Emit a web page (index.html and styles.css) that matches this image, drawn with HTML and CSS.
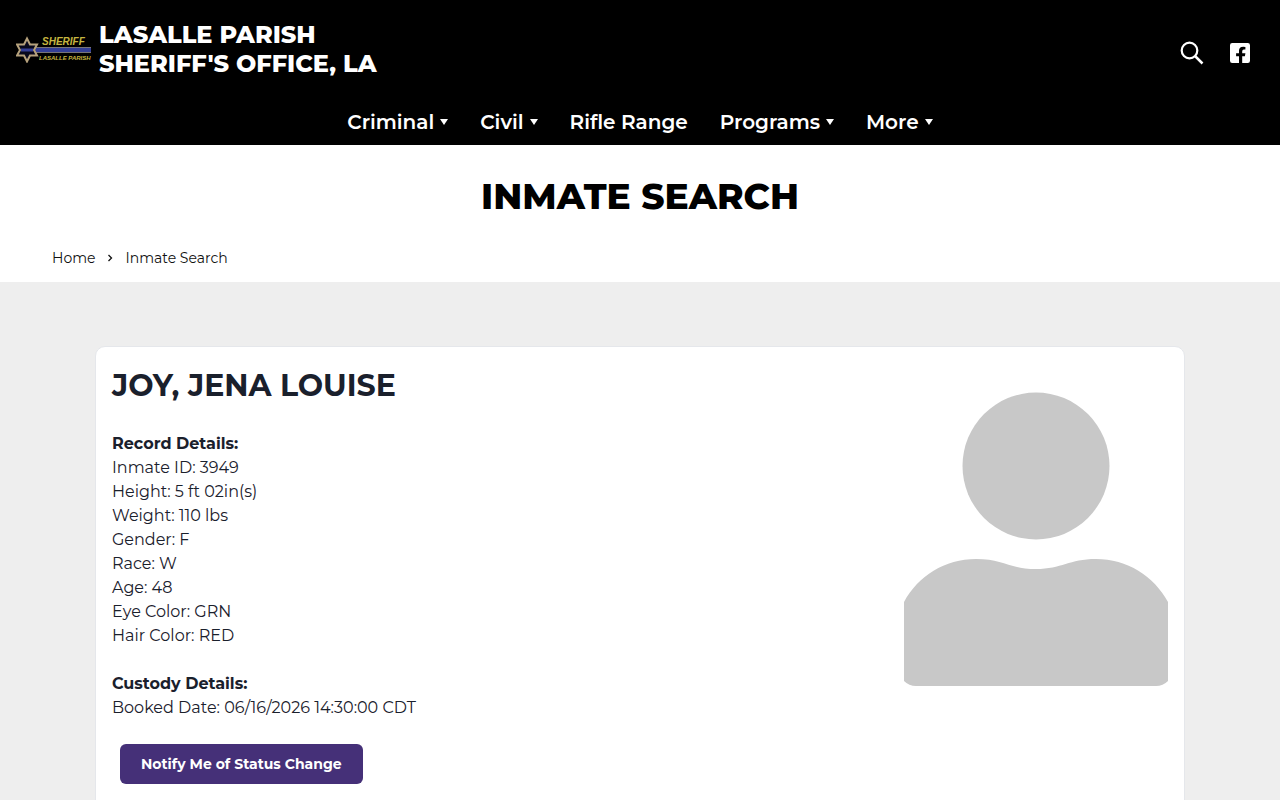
FILE: index.html
```html
<!DOCTYPE html>
<html lang="en">
<head>
<meta charset="utf-8">
<title>Inmate Search</title>
<link rel="stylesheet" href="styles.css">
</head>
<body>
<header class="header">
  <div class="topbar">
    <a class="brand" href="#">
      <svg class="logo" viewBox="0 -1 76 28" aria-hidden="true">
        <path d="M19 11.5H75M19 16.5H75" stroke="#777477" stroke-width="1"/>
        <path d="M5 14H75" stroke="#343f96" stroke-width="4"/>
        <path d="M11 2.500L14 8.500H21L18 14L21 19.500H14L11 25.500L8 19.500H1L4 14L1 8.500H8Z" fill="#08091c" stroke="#b5a17c" stroke-width="2"/>
        <path d="M5 14H17" stroke="#343f96" stroke-width="3"/>
        <text class="logo-text" x="26" y="9" font-size="10">SHERIFF</text>
        <text class="logo-text" x="23" y="24" font-size="6">LASALLE PARISH</text>
      </svg>
      <span class="office">LASALLE PARISH<br>SHERIFF'S OFFICE, LA</span>
    </a>
    <div class="tools">
      <button class="tool" type="button" aria-label="Search">
        <svg width="24" height="24" viewBox="0 0 24 24"><circle cx="9.500" cy="9.500" r="7.800" fill="none" stroke="#fff" stroke-width="2.200"/><path d="M15 15L22.500 22.500" stroke="#fff" stroke-width="2.500"/></svg>
      </button>
      <a class="tool" href="#" aria-label="Facebook">
        <svg width="20" height="20" viewBox="0 0 20 20"><path fill="#fff" d="M2.200 0H17.800Q20 0 20 2.200V17.800Q20 20 17.800 20H12.200V13.300H14.900L15.400 10.200H12.200V8.200Q12.200 6.600 13.900 6.600H15.400V3.900Q14.300 3.700 13.200 3.700Q9 3.700 9 7.700V10.200H6.100V13.300H9V20H2.200Q0 20 0 17.800V2.200Q0 0 2.200 0Z"/></svg>
      </a>
    </div>
  </div>
  <nav class="nav">
    <a class="nav-link drop" href="#">Criminal</a>
    <a class="nav-link drop" href="#">Civil</a>
    <a class="nav-link" href="#">Rifle Range</a>
    <a class="nav-link drop" href="#">Programs</a>
    <a class="nav-link drop" href="#">More</a>
  </nav>
</header>

<h1 class="page-title">INMATE SEARCH</h1>
<nav class="crumbs">
  <a href="#">Home</a>
  <svg class="chevron" width="6" height="8" viewBox="0 0 6 8"><path d="M1.500 1L4.500 4L1.500 7" fill="none" stroke="#111" stroke-width="1.300"/></svg>
  <span>Inmate Search</span>
</nav>

<main class="main">
  <div class="card">
    <div class="details">
      <h2 class="name">JOY, JENA LOUISE</h2>
      <h3 class="label">Record Details:</h3>
      <p class="record">
        Inmate ID: 3949<br>
        Height: 5 ft 02in(s)<br>
        Weight: 110 lbs<br>
        Gender: F<br>
        Race: W<br>
        Age: 48<br>
        Eye Color: GRN<br>
        Hair Color: RED
      </p>
      <h3 class="label">Custody Details:</h3>
      <p class="record">Booked Date: 06/16/2026 14:30:00 CDT</p>
      <button class="notify" type="button">Notify Me of Status Change</button>
    </div>
    <svg class="photo" viewBox="0 0 264 298" role="img" aria-label="No photo">
      <circle cx="132" cy="76" r="73.500" fill="#c8c8c8"/>
      <path fill="#c8c8c8" d="M0 212C14 186 41 169 72 169C99 169 106 179 132 179C158 179 165 169 192 169C223 169 250 186 264 212V291Q259 296 252 296H12Q5 296 0 291Z"/>
    </svg>
  </div>
</main>
</body>
</html>
```
FILE: styles.css
```css
body
{
  margin: 0;
  background: #eee;
  color: #1a202c;
  font-family: Montserrat, Inter, "Open Sans", sans-serif;
  font-size: 16px;
  line-height: 24px;
}
a
{
  color: inherit;
  text-decoration: none;
}

/* header */
.header
{
  background: #000;
  color: #fff;
  padding-bottom: 4px;
}
.topbar
{
  display: flex;
  justify-content: space-between;
  align-items: center;
  padding: 20px 30px 25px 16px;
}
.brand
{
  display: flex;
  align-items: center;
  gap: 7px;
}
.logo
{
  width: 76px;
}
.logo-text
{
  fill: #c6b640;
  font-family: "Liberation Sans", sans-serif;
  font-style: italic;
  font-weight: 700;
}
.office
{
  font-size: 24px;
  line-height: 29px;
  font-weight: 800;
}
.tools
{
  display: flex;
  align-items: center;
  gap: 26px;
  padding-top: 8px;
}
.tool
{
  display: flex;
  padding: 0;
  border: 0;
  background: none;
}
.nav
{
  display: flex;
  justify-content: center;
  gap: 32px;
}
.nav-link
{
  display: flex;
  align-items: center;
  gap: 6px;
  font-size: 20px;
  line-height: 38px;
  font-weight: 600;
}
.drop::after
{
  content: "";
  border: 4px solid transparent;
  border-top: 6px solid #fff;
  border-bottom: 0;
}

/* title and breadcrumb */
.page-title
{
  margin: 0;
  padding: 27px 16px 26px;
  background: #fff;
  color: #000;
  font-size: 36px;
  line-height: 48px;
  font-weight: 800;
  text-align: center;
}
.crumbs
{
  display: flex;
  align-items: center;
  gap: 12px;
  padding: 0 52px 12px;
  background: #fff;
  color: #111;
  font-size: 14px;
}

/* inmate record */
.main
{
  padding: 64px 95px;
}
.card
{
  display: flex;
  justify-content: space-between;
  align-items: flex-start;
  padding: 16px 16px 40px;
  border: 1px solid #e5e7eb;
  border-radius: 10px;
  background: #fff;
}
.name
{
  margin: 0 0 24px;
  font-size: 30px;
  line-height: 45px;
  font-weight: 700;
}
.label
{
  margin: 0;
  font-size: 16px;
  font-weight: 700;
}
.record
{
  margin: 0 0 24px;
}
.notify
{
  margin: 0 8px;
  padding: 8px 21px;
  border: 0;
  border-radius: 6px;
  background: #453078;
  color: #fff;
  font-family: inherit;
  font-size: 14px;
  line-height: 24px;
  font-weight: 700;
}
.photo
{
  width: 264px;
  flex-shrink: 0;
  margin-top: 27px;
}
```
